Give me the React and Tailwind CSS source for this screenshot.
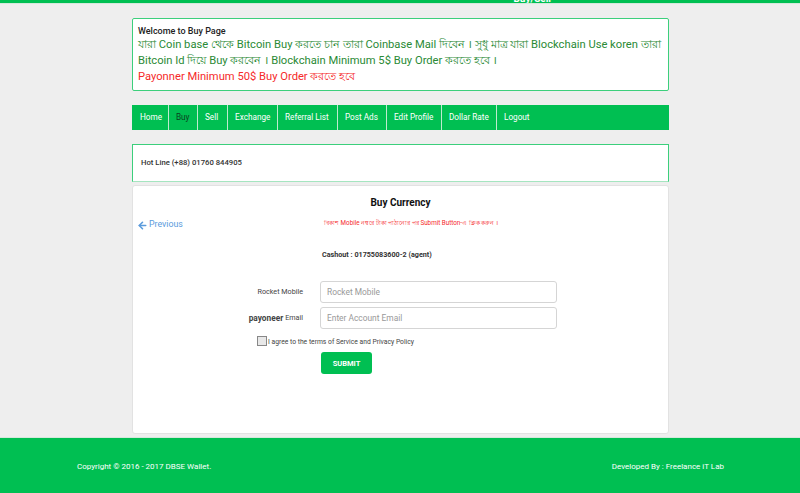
import React from 'react';
import { ArrowLeft } from 'lucide-react';

const navItems = ['Home', 'Buy', 'Sell', 'Exchange', 'Referral List', 'Post Ads', 'Edit Profile', 'Dollar Rate', 'Logout'];
const navWidths = ['w-[36px]', 'w-[29px]', 'w-[30px]', 'w-[50px]', 'w-[60px]', 'w-[49px]', 'w-[55px]', 'w-[55px]', 'w-[43px]'];

function FormRow({ label, placeholder }) {
    return (
        <div className="flex items-center h-[22px]">
            <div className="w-[187px] flex justify-end items-center pr-[17px] text-[7.2px] text-[#444]">{label}</div>
            <input
                className="w-[237px] h-[22px] border border-[#d5d5d5] rounded-[3px] bg-white px-[6px] text-[8.4px] placeholder:text-[#999]"
                placeholder={placeholder}
            />
        </div>
    );
}

export default function App() {
    return (
        <div className="h-[493px] w-[800px] overflow-hidden bg-[#eeeeee] flex flex-col font-['Roboto','Noto_Sans',sans-serif]">
            <div className="h-[4px] shrink-0 bg-[#00bf52] border-b border-[#d5e8dc] flex justify-end overflow-hidden">
                <span className="mr-[249px] -mt-[9px] text-[10px] font-bold text-white">Buy/Sell</span>
            </div>

            <div className="w-[537px] ml-[132px] mt-[14px] flex flex-col">
                <div className="h-[73px] bg-white border border-[#3ccf7c] rounded-[2px] px-[5px] pt-[6px]">
                    <div className="text-[9px] leading-[12px] font-medium text-[#222]">Welcome to Buy Page</div>
                    <div className="text-[11.2px] leading-[16px] text-[#2a8a35] whitespace-nowrap">যারা Coin base থেকে Bitcoin Buy করতে চান তারা Coinbase Mail দিবেন । সুধু মাত্র যারা Blockchain Use koren তারা</div>
                    <div className="text-[11.2px] leading-[16px] text-[#2a8a35] whitespace-nowrap">Bitcoin Id দিয়ে Buy করবেন । Blockchain Minimum 5$ Buy Order করতে হবে ।</div>
                    <div className="text-[11.2px] leading-[16px] text-[#f52a2a] whitespace-nowrap">Payonner Minimum 50$ Buy Order করতে হবে</div>
                </div>

                <nav className="mt-[14px] h-[25px] bg-[#00bf52] flex pl-px">
                    {navItems.map((item, i) => (
                        <div
                            key={item}
                            className={`${navWidths[i]} ${i === 8 ? 'grow border-r-0' : 'border-r'} shrink-0 flex items-center pl-[7px] whitespace-nowrap text-[8.2px] border-[#bfeacf] ${item === 'Buy' ? 'text-[#0b3d20]' : 'text-white'}`}
                        >
                            {item}
                        </div>
                    ))}
                </nav>

                <div className="mt-[14px] h-[38px] bg-white border border-[#3ccf7c] border-b-[#a5e5c0] flex items-center pl-[8px] text-[7.7px] font-medium text-[#333]">
                    Hot Line (+88) 01760 844905
                </div>

                <div className="mt-[3px] h-[249px] bg-white border border-[#e2e2e2] rounded-[3px] flex flex-col">
                    <div className="pt-[10px] text-center text-[10px] leading-[14px] font-bold text-[#111]">Buy Currency</div>
                    <div className="mt-[9px] flex items-center h-[12px]">
                        <div className="flex items-center gap-[1px] pl-[4px] w-[191px] text-[8.8px] text-[#5b9bdc]">
                            <ArrowLeft size={11} strokeWidth={3.5} />
                            <span>Previous</span>
                        </div>
                        <div className="-mt-[2px] text-[6.3px] text-[#f52a2a] whitespace-nowrap">বিকাশ Mobile নম্বরে টাকা পাঠানোর পর Submit Button-এ ক্লিক করুন ।</div>
                    </div>
                    <div className="mt-[19px] pl-[189px] text-[7.2px] leading-[10px] font-bold text-[#333]">Cashout : 01755083600-2 (agent)</div>

                    <div className="mt-[21px] flex flex-col gap-[4px]">
                        <FormRow label="Rocket Mobile" placeholder="Rocket Mobile" />
                        <FormRow
                            label={<><span className="font-bold text-[8.3px] text-[#444] mr-[2px]">payoneer</span>Email</>}
                            placeholder="Enter Account Email"
                        />
                    </div>

                    <div className="mt-[6px] pl-[124px] flex items-center gap-[1px]">
                        <div className="w-[10px] h-[10px] border border-[#888] bg-[#e8e8e8]" />
                        <span className="text-[6.75px] text-[#444] mt-[2px]">I agree to the terms of Service and Privacy Policy</span>
                    </div>

                    <button className="mt-[5px] ml-[188px] w-[51px] h-[22px] bg-[#00bf52] rounded-[3px] text-[7.5px] font-bold text-white">SUBMIT</button>
                </div>
            </div>

            <footer className="mt-[3px] grow bg-[#00bf52] border-t border-[#d5e8dc] flex items-start justify-between pl-[77px] pr-[76px] pt-[23px] text-[8px] text-white">
                <span>Copyright © 2016 - 2017 DBSE Wallet.</span>
                <span>Developed By : Freelance iT Lab</span>
            </footer>
        </div>
    );
}
